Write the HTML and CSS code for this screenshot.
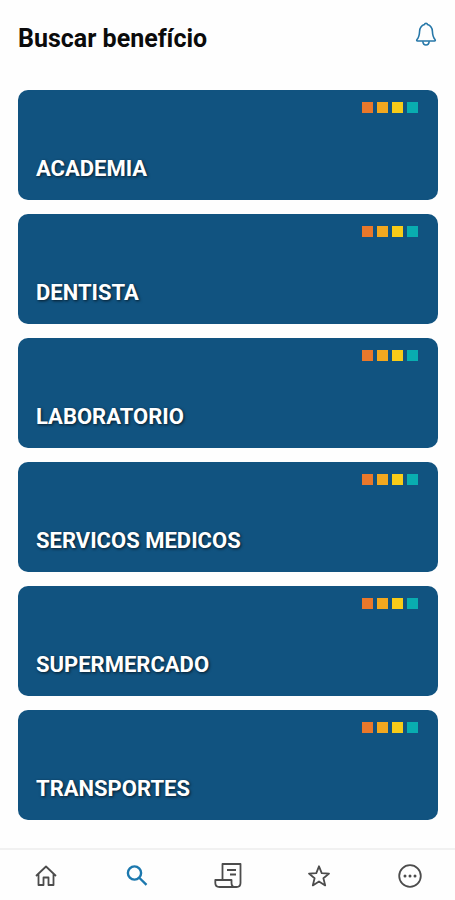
FILE: index.html
```html
<!DOCTYPE html>
<html lang="pt-BR">
<head>
  <meta charset="UTF-8" />
  <meta name="viewport" content="width=device-width, initial-scale=1.0"/>
  <title>Buscar benefício</title>
  <link rel="stylesheet" href="styles.css">
</head>
<body>

  <!-- Header -->
  <header class="site-header">
    <h1>Buscar benefício</h1>
    <button type="button" class="bell" aria-label="Notificações">
      <svg viewBox="0 0 24 26" width="24" height="26">
        <path d="M12 1.200c-.9 0-1.400.6-1.500 1.400C7.400 3.600 5.800 6 5.600 9.300c-.2 4.300-.7 6.200-2.600 8.200-.6.700-.3 1.500.5 1.500h17c.8 0 1.100-.8.5-1.500-1.900-2-2.400-3.900-2.600-8.200-.2-3.300-1.800-5.700-4.900-6.700-.1-.8-.6-1.400-1.500-1.400z"/>
        <path d="M8.800 19.200c.2 2.500 1.400 3.800 3.200 3.800s3-1.300 3.200-3.800"/>
      </svg>
    </button>
  </header>

  <!-- Categories -->
  <main class="cards">
    <a class="card" href="#academia">
      <span class="squares"><i class="orange"></i><i class="amber"></i><i class="yellow"></i><i class="teal"></i></span>
      <span class="name">ACADEMIA</span>
    </a>
    <a class="card" href="#dentista">
      <span class="squares"><i class="orange"></i><i class="amber"></i><i class="yellow"></i><i class="teal"></i></span>
      <span class="name">DENTISTA</span>
    </a>
    <a class="card" href="#laboratorio">
      <span class="squares"><i class="orange"></i><i class="amber"></i><i class="yellow"></i><i class="teal"></i></span>
      <span class="name">LABORATORIO</span>
    </a>
    <a class="card" href="#servicos-medicos">
      <span class="squares"><i class="orange"></i><i class="amber"></i><i class="yellow"></i><i class="teal"></i></span>
      <span class="name">SERVICOS MEDICOS</span>
    </a>
    <a class="card" href="#supermercado">
      <span class="squares"><i class="orange"></i><i class="amber"></i><i class="yellow"></i><i class="teal"></i></span>
      <span class="name">SUPERMERCADO</span>
    </a>
    <a class="card" href="#transportes">
      <span class="squares"><i class="orange"></i><i class="amber"></i><i class="yellow"></i><i class="teal"></i></span>
      <span class="name">TRANSPORTES</span>
    </a>
  </main>

  <!-- Bottom Navigation -->
  <nav class="bottom-nav">
    <a href="#inicio" aria-label="Início">
      <svg viewBox="0 0 28 28" width="28" height="28">
        <path d="M4 14L14 4.500 24 14M6.500 12v11h5v-7.500h5V23h5V12"/>
      </svg>
    </a>
    <a href="#buscar" class="active" aria-label="Buscar">
      <svg viewBox="0 0 28 28" width="28" height="28">
        <circle cx="11.500" cy="11" r="6.600"/>
        <path d="M16.500 16l7 6.800"/>
      </svg>
    </a>
    <a href="#extrato" aria-label="Extrato">
      <svg viewBox="0 0 28 28" width="28" height="28">
        <path d="M8.500 18V2h18v19c0 2.600-1.400 4-4 4H5.500c-2.700 0-4.200-1.500-4.200-4v-3h16.200v3c0 2.400 1.200 4 3.500 4M13 8h9M16 12.500h6"/>
      </svg>
    </a>
    <a href="#favoritos" aria-label="Favoritos">
      <svg viewBox="0 0 28 28" width="28" height="28">
        <path d="M14 4.300l2.700 6.800 7.300.5-5.600 4.700 1.800 7.100L14 19.500l-6.200 3.900 1.800-7.100L4 11.600l7.300-.5z"/>
      </svg>
    </a>
    <a href="#mais" aria-label="Mais">
      <svg viewBox="0 0 28 28" width="28" height="28">
        <circle cx="14" cy="14" r="10.800"/>
        <g class="dots"><circle cx="9" cy="14" r="1.500"/><circle cx="14" cy="14" r="1.500"/><circle cx="19" cy="14" r="1.500"/></g>
      </svg>
    </a>
  </nav>

</body>
</html>
```
FILE: styles.css
```css
/* Reset & Base */
* { margin: 0; padding: 0; box-sizing: border-box; }
body {
  font-family: Roboto, 'Liberation Sans', sans-serif;
  color: #0b0b0b;
  background: #fefefe;
  min-height: 100vh;
  display: flex;
  flex-direction: column;
}
a { text-decoration: none; color: inherit; }
svg { display: block; fill: none; stroke: currentColor; stroke-linejoin: round; }

/* Header */
.site-header {
  display: flex;
  justify-content: space-between;
  align-items: flex-start;
  padding: 22px 17px 0 18px;
}
.site-header h1 { font-size: 25px; line-height: 34px; font-weight: 700; }
.bell {
  border: none;
  background: none;
  color: #2677a8;
  cursor: pointer;
}
.bell svg { stroke-width: 1.6; }

/* Cards */
.cards {
  flex: 1;
  display: flex;
  flex-direction: column;
  gap: 14px;
  padding: 34px 17px 28px 18px;
}
.card {
  height: 110px;
  display: flex;
  flex-direction: column;
  justify-content: space-between;
  padding: 12px 20px 17px 18px;
  border-radius: 10px;
  background: #115380;
}
.card .name {
  font-size: 22px;
  line-height: 28px;
  font-weight: 700;
  color: #fff;
  text-shadow: 1px 1px 3px rgba(0,0,0,0.7);
}
.squares { display: flex; justify-content: flex-end; gap: 4px; }
.squares i { width: 11px; height: 11px; }
.orange { background: #e9782b; }
.amber { background: #f2a81f; }
.yellow { background: #f8cc18; }
.teal { background: #09adb0; }

/* Bottom Navigation */
.bottom-nav {
  display: flex;
  height: 52px;
  padding-top: 2px;
  border-top: 2px solid #f1f1f1;
  color: #4c4c4c;
}
.bottom-nav a {
  flex: 1;
  display: flex;
  justify-content: center;
  align-items: center;
}
.bottom-nav svg { stroke-width: 1.8; }
.bottom-nav .active { color: #1c78ae; }
.bottom-nav .active svg { stroke-width: 2.4; }
.bottom-nav .dots { fill: currentColor; stroke: none; }
```
